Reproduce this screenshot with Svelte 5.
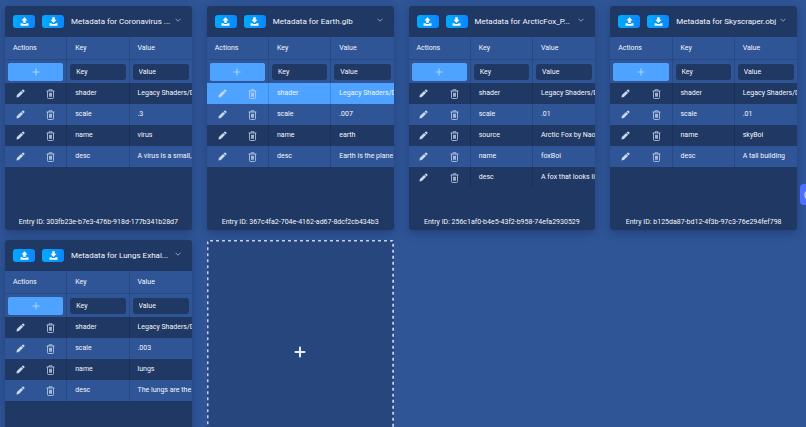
<script>
	let highlighted = $state('earth-shader');

	const shader = { key: 'shader', value: 'Legacy Shaders/D' };

	let entries = [
		{
			slug: 'corona',
			title: 'Coronavirus ...',
			id: '303fb23e-b7e3-476b-918d-177b341b28d7',
			rows: [
				shader,
				{ key: 'scale', value: '.3' },
				{ key: 'name', value: 'virus' },
				{ key: 'desc', value: 'A virus is a small,' }
			]
		},
		{
			slug: 'earth',
			title: 'Earth.glb',
			id: '367c4fa2-704e-4162-ad67-8dcf2cb434b3',
			rows: [
				shader,
				{ key: 'scale', value: '.007' },
				{ key: 'name', value: 'earth' },
				{ key: 'desc', value: 'Earth is the plane' }
			]
		},
		{
			slug: 'fox',
			title: 'ArcticFox_P...',
			id: '256c1af0-b4e5-43f2-b958-74efa2930529',
			rows: [
				shader,
				{ key: 'scale', value: '.01' },
				{ key: 'source', value: 'Arctic Fox by Nao' },
				{ key: 'name', value: 'foxBoi' },
				{ key: 'desc', value: 'A fox that looks li' }
			]
		},
		{
			slug: 'sky',
			title: 'Skyscraper.obj',
			id: 'b125da87-bd12-4f3b-97c3-76e294fef798',
			rows: [
				shader,
				{ key: 'scale', value: '.01' },
				{ key: 'name', value: 'skyBoi' },
				{ key: 'desc', value: 'A tall building' }
			]
		},
		{
			slug: 'lungs',
			title: 'Lungs Exhal...',
			rows: [
				shader,
				{ key: 'scale', value: '.003' },
				{ key: 'name', value: 'lungs' },
				{ key: 'desc', value: 'The lungs are the' }
			]
		}
	];
</script>

{#snippet transfer(up)}
	<svg width="9" height="9" viewBox="0 0 18 18" fill="#fff">
		{#if up}
			<path d="M9 0.5 L15 7 H11.5 V12 H6.5 V7 H3 Z" />
		{:else}
			<path d="M6.5 0.5 H11.5 V5.5 H15 L9 12 L3 5.5 H6.5 Z" />
		{/if}
		<path d="M1 12.5 H5.5 V14 H12.5 V12.5 H17 V17.5 H1 Z" />
	</svg>
{/snippet}

<main>
	<div class="grid">
		{#each entries as entry (entry.slug)}
			<article class="card">
				<header>
					<button class="transfer" aria-label="Upload">{@render transfer(true)}</button>
					<button class="transfer" aria-label="Download">{@render transfer(false)}</button>
					<h2>Metadata for {entry.title}</h2>
					<button class="toggle" aria-label="Collapse">
						<svg width="6" height="4" viewBox="0 0 12 8" fill="none" stroke="#a9bbd8" stroke-width="1.6">
							<path d="M1 1.5 L6 6.5 L11 1.5" />
						</svg>
					</button>
				</header>

				<table>
					<thead>
						<tr>
							<th>Actions</th>
							<th>Key</th>
							<th>Value</th>
						</tr>
					</thead>
					<tbody>
						<tr class="new">
							<td>
								<button class="add" aria-label="Add field">
									<svg width="8" height="8" viewBox="0 0 16 16" stroke="#c4e0ff" stroke-width="1.6">
										<path d="M8 1 V15 M1 8 H15" />
									</svg>
								</button>
							</td>
							<td><input type="text" placeholder="Key" aria-label="Key" /></td>
							<td><input type="text" placeholder="Value" aria-label="Value" /></td>
						</tr>
						{#each entry.rows as row}
							<tr
								class="field"
								class:active={highlighted === `${entry.slug}-${row.key}`}
								onmouseenter={() => (highlighted = `${entry.slug}-${row.key}`)}
							>
								<td class="actions">
									<div>
										<button aria-label="Edit {row.key}">
											<svg width="9" height="9" viewBox="0 0 20 20" fill="#c9d7ee">
												<path d="M1 19 L2 13.6 L11.4 4.2 L15.8 8.6 L6.4 18 Z" />
												<path d="M12.4 3.2 L14.4 1.4 Q15.8 0.5 17 1.6 L18.4 3 Q19.5 4.2 18.6 5.6 L16.8 7.6 Z" />
											</svg>
										</button>
										<button aria-label="Delete {row.key}">
											<svg width="9" height="10" viewBox="0 0 18 20" fill="none" stroke="#c9d7ee" stroke-width="1.5">
												<path d="M1 4 H17 M6 4 V1.5 H12 V4 M3 4 V17 Q3 19 5 19 H13 Q15 19 15 17 V4 M7 7.5 V15.5 M11 7.5 V15.5 M9 7.5 V15.5" />
											</svg>
										</button>
									</div>
								</td>
								<td>{row.key}</td>
								<td>{row.value}</td>
							</tr>
						{/each}
					</tbody>
				</table>

				{#if entry.id}
					<footer>Entry ID: {entry.id}</footer>
				{/if}
			</article>
		{/each}

		<button class="new-entry" aria-label="New entry">
			<svg class="outline" width="100%" height="100%">
				<rect width="100%" height="100%" rx="3" />
			</svg>
			<svg width="12" height="12" viewBox="0 0 12 12" stroke="#e6edf8" stroke-width="2" stroke-linecap="round">
				<path d="M6 1.5 V10.5 M1.5 6 H10.5" />
			</svg>
		</button>
	</div>

	<button class="help" aria-label="Help">
		<svg width="12" height="12" viewBox="0 0 12 12" fill="none" stroke="#c5d0ff" stroke-width="1.4">
			<circle cx="6" cy="6" r="5" />
		</svg>
	</button>
</main>

<style>
	:global(body) {
		background: #2f5597;
	}

	main {
		height: 100vh;
		overflow: hidden auto;
		scrollbar-width: none;
		box-sizing: border-box;
		padding: 6px 9px 6px 5px;
		background: #2f5597;
		color: #f3f7fd;
		font-family: Roboto, "Liberation Sans", sans-serif;
		font-size: 7px;
		font-weight: 400;
		line-height: 9px;
	}

	button {
		display: flex;
		align-items: center;
		justify-content: center;
		padding: 0;
		border: 0;
		background: none;
		cursor: pointer;
	}

	svg {
		display: block;
	}

	.grid {
		display: grid;
		grid-template-columns: repeat(4, minmax(0, 1fr));
		grid-auto-rows: minmax(224px, auto);
		gap: 10px 15px;
	}

	.card {
		display: flex;
		flex-direction: column;
		overflow: hidden;
		border-radius: 3px;
		background: #203864;
		box-shadow: 0 3px 8px rgba(20, 40, 85, 0.45);
	}

	header {
		display: flex;
		align-items: center;
		gap: 7px;
		height: 31px;
		padding: 0 10px 0 8px;
	}

	.transfer {
		flex: none;
		width: 22px;
		height: 13px;
		border-radius: 3px;
		background: linear-gradient(90deg, #00aaff, #0c86ff);
	}

	h2 {
		flex: 1;
		min-width: 0;
		margin: 0;
		white-space: nowrap;
		font-size: 8px;
		font-weight: 400;
		line-height: 12px;
	}

	.toggle {
		flex: none;
		width: 8px;
		height: 12px;
		align-items: flex-start;
		padding-top: 2px;
	}

	table {
		width: 100%;
		table-layout: fixed;
		border-collapse: separate;
		border-spacing: 0;
	}

	th,
	td {
		box-sizing: border-box;
		height: 21px;
		padding: 0 0 0 8px;
		overflow: hidden;
		border-right: 1px solid #264a86;
		text-align: left;
		white-space: nowrap;
		font-weight: 400;
	}

	th:last-child,
	td:last-child {
		border-right: 0;
	}

	th {
		height: 23px;
		border-bottom: 1px solid #264a86;
		background: #2f5597;
	}

	.new td {
		height: 23px;
		padding: 0 3px;
		background: #2f5597;
	}

	.add {
		width: 100%;
		height: 18px;
		border-radius: 2px;
		background: #4da3ff;
	}

	input {
		display: block;
		box-sizing: border-box;
		width: 100%;
		height: 16px;
		padding: 0 6px;
		border: 0;
		border-radius: 3px;
		background: #203864;
		color: #f3f7fd;
		font: inherit;
	}

	input::placeholder {
		color: #f3f7fd;
		opacity: 1;
	}

	.field:nth-child(even) td {
		border-color: #1c3159;
	}

	.field:nth-child(odd) td {
		background: #2f5597;
	}

	.field.active td {
		border-color: #3b8be0;
		background: #4da3ff;
	}

	td.actions {
		padding: 0;
	}

	.actions div {
		display: grid;
		grid-template-columns: 1fr 1fr;
	}

	footer {
		margin-top: auto;
		padding-bottom: 3px;
		text-align: center;
	}

	.new-entry {
		position: relative;
		border-radius: 3px;
		background: #28467e;
	}

	.outline {
		position: absolute;
		inset: 0;
		fill: none;
		stroke: #c3d2ea;
		stroke-width: 3;
		stroke-dasharray: 3 3;
	}

	.help {
		position: fixed;
		top: 184px;
		right: -14px;
		width: 20px;
		height: 21px;
		border-radius: 4px;
		background: #4c6fff;
	}
</style>
